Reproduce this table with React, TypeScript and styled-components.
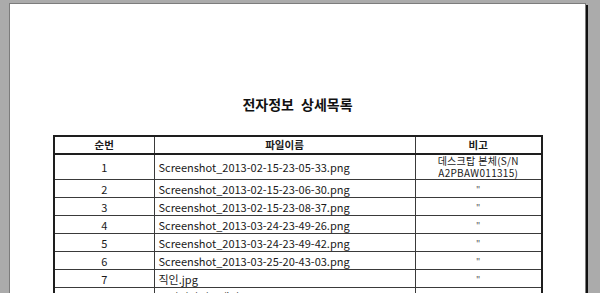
import styled, { createGlobalStyle } from 'styled-components'

const GlobalStyle = createGlobalStyle`
  html, body {
    margin: 0;
    padding: 0;
    background: #ababab;
    overflow: hidden;
  }
  body {
    font-family: "Noto Sans CJK KR", "Noto Sans", sans-serif;
  }
`

const Viewport = styled.div`
  width: 600px;
  height: 293px;
  padding: 3px 0 0 9px;
  box-sizing: border-box;
  overflow: hidden;
`

const Sheet = styled.div`
  width: 577px;
  height: 400px;
  background: #ffffff;
  border: 1px solid #7c7c7c;
  box-shadow: 2px 2px 0 #111;
  box-sizing: border-box;
  padding-top: 91px;
`

const Title = styled.h1`
  margin: 0 0 22px;
  text-align: center;
  font-size: 14px;
  font-weight: 700;
  line-height: 18px;
  color: #111;
  word-spacing: 4px;
`

const Table = styled.table`
  width: 488px;
  margin: 0 0 0 43px;
  border-collapse: collapse;
  table-layout: fixed;
  border: 2px solid #1e1e1e;
  font-size: 11px;
  color: #1a1a1a;
`

const Head = styled.th`
  height: 16px;
  padding: 0;
  font-size: 10.5px;
  font-weight: 700;
  text-align: center;
  border-left: 1px solid #3a3a3a;
  border-bottom: 2px solid #1e1e1e;
  line-height: 14px;
`

const Cell = styled.td<{ $align?: 'left' | 'center' }>`
  height: 17px;
  padding: 0 0 0 ${(p) => (p.$align === 'left' ? '4px' : '0')};
  text-align: ${(p) => p.$align ?? 'center'};
  border-left: 1px solid #3a3a3a;
  border-bottom: 1px solid #3a3a3a;
  line-height: 14px;
  white-space: nowrap;
  overflow: hidden;
`

const Note = styled.div`
  font-size: 10px;
  line-height: 12px;
  padding: 0;
  letter-spacing: 0.3px;
`

const Ditto = styled.span`
  font-size: 9px;
  color: #555;
`

const rows = [
  'Screenshot_2013-02-15-23-05-33.png',
  'Screenshot_2013-02-15-23-06-30.png',
  'Screenshot_2013-02-15-23-08-37.png',
  'Screenshot_2013-03-24-23-49-26.png',
  'Screenshot_2013-03-24-23-49-42.png',
  'Screenshot_2013-03-25-20-43-03.png',
  '직인.jpg',
  '조민지자기소개서2013-6-16.hwp',
]

export default function App() {
  return (
    <>
      <GlobalStyle />
      <Viewport>
        <Sheet>
          <Title>전자정보 상세목록</Title>
          <Table>
            <colgroup>
              <col style={{ width: 100 }} />
              <col style={{ width: 261 }} />
              <col style={{ width: 127 }} />
            </colgroup>
            <thead>
              <tr>
                <Head>순번</Head>
                <Head>파일이름</Head>
                <Head>비고</Head>
              </tr>
            </thead>
            <tbody>
              {rows.map((name, i) => (
                <tr key={name}>
                  <Cell>{i + 1}</Cell>
                  <Cell $align="left">{name}</Cell>
                  <Cell>
                    {i === 0 ? (
                      <Note>
                        데스크탑 본체(S/N
                        <br />
                        A2PBAW011315)
                      </Note>
                    ) : (
                      <Ditto>"</Ditto>
                    )}
                  </Cell>
                </tr>
              ))}
            </tbody>
          </Table>
        </Sheet>
      </Viewport>
    </>
  )
}
